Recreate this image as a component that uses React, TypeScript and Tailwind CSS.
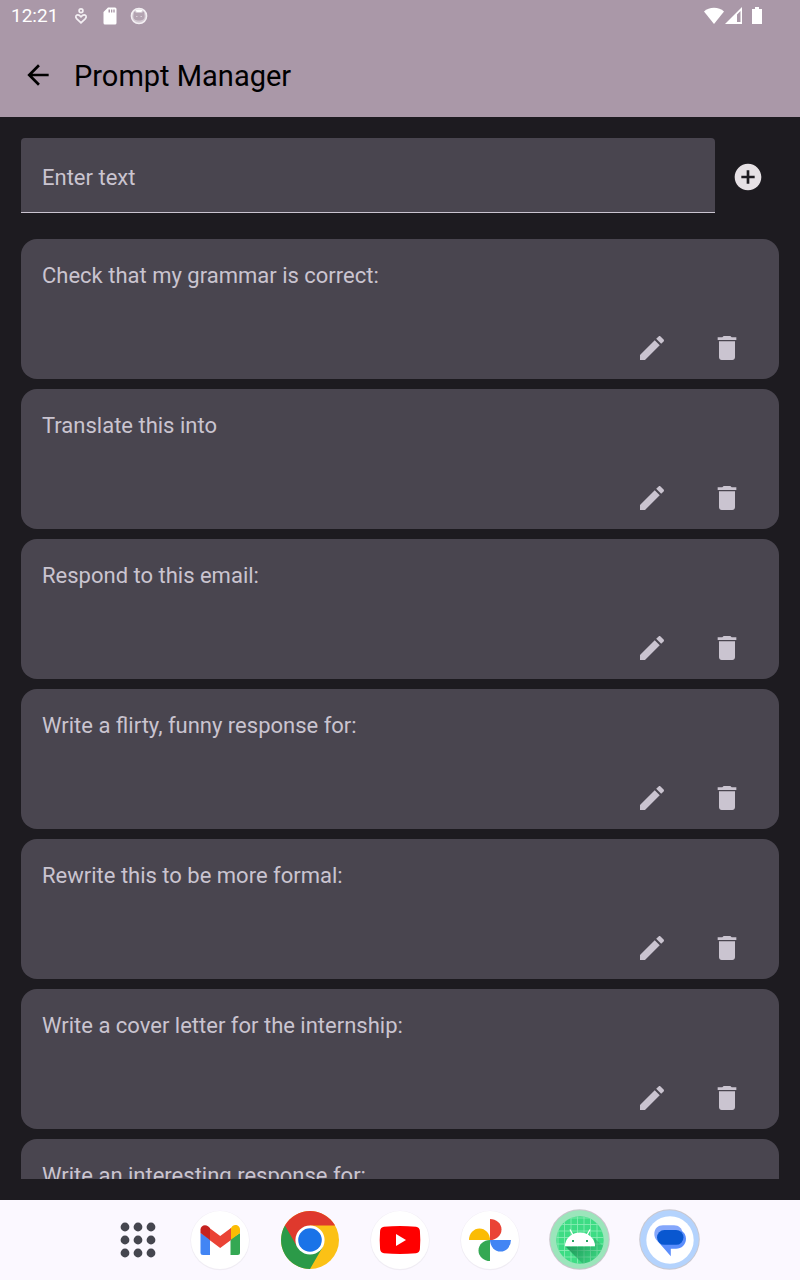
import type { ReactNode } from "react";

const prompts = [
  "Check that my grammar is correct:",
  "Translate this into",
  "Respond to this email:",
  "Write a flirty, funny response for:",
  "Rewrite this to be more formal:",
  "Write a cover letter for the internship:",
  "Write an interesting response for:",
];

function Icon({ d }: { d: string }) {
  return (
    <svg viewBox="0 0 24 24" className="size-8" fill="currentColor" aria-hidden="true">
      <path d={d} />
    </svg>
  );
}

const ARROW_BACK = "M20 11H7.830l5.590-5.590L12 4l-8 8 8 8 1.410-1.410L7.830 13H20v-2z";
const ADD_CIRCLE = "M12 2C6.480 2 2 6.480 2 12s4.480 10 10 10 10-4.480 10-10S17.520 2 12 2zm5 11h-4v4h-2v-4H7v-2h4V7h2v4h4v2z";
const EDIT =
  "M3 17.250V21h3.750L17.810 9.940l-3.750-3.750L3 17.250zM20.710 7.040c.39-.39.39-1.020 0-1.410l-2.340-2.340c-.39-.39-1.020-.39-1.410 0l-1.830 1.830 3.750 3.750 1.830-1.830z";
const DELETE = "M6 19c0 1.100.9 2 2 2h8c1.100 0 2-.9 2-2V7H6v12zM19 4h-3.500l-1-1h-5l-1 1H5v2h14V4z";

function StatusBar() {
  return (
    <div className="flex h-8 items-center pl-[11px] pr-[38px] text-[19px] leading-8 text-white">
      <span>12:21</span>
      <svg viewBox="0 0 14 18" className="ml-4 h-[18px] w-[14px]" fill="none" stroke="#f3eff3" strokeWidth="1.700" aria-hidden="true">
        <circle cx="7" cy="3.800" r="1.900" />
        <path d="M7 15.800 2.600 11.600C1 9.800 2 7.800 3.800 7.800c1.500 0 2.400 1 3.200 2 .8-1 1.700-2 3.200-2 1.800 0 2.800 2 1.200 3.800z" />
      </svg>
      <svg viewBox="0 0 14 18" className="ml-[15px] h-[18px] w-[14px]" aria-hidden="true">
        <path fill="#fff" fillRule="evenodd" d="M5 .5h7a1.500 1.500 0 0 1 1.500 1.500v14a1.500 1.500 0 0 1-1.500 1.500H2A1.500 1.500 0 0 1 .5 16V5zM5.500 2.500v3H7v-3zM8 2.500v3h1.300v-3zM10.300 2.500v3h1.400v-3z" />
      </svg>
      <svg viewBox="0 0 18 18" className="ml-[13px] size-[18px]" aria-hidden="true">
        <circle cx="9" cy="9" r="7.600" fill="#d3c9d2" stroke="#f3eff3" strokeWidth="1.500" />
        <path d="M4 4.500 6.500 6h5L14 4.500l.6 5c0 3-2.500 4-5.600 4s-5.600-1-5.600-4z" fill="#b3a3b1" />
        <path d="M5.500 3.200C7.500 2.300 10.500 2.300 12.500 3.200L11.300 5H6.700z" fill="#fff" />
        <path d="M6 9.500h1.500M10.500 9.500H12" stroke="#d8cfd7" />
      </svg>
      <span className="grow" />
      <div className="flex items-center pb-[2px]">
        <svg viewBox="0 0 20 17" className="h-[17px] w-5" fill="#fff" aria-hidden="true">
          <path d="M10 17 0 4.500C5-.5 15-.5 20 4.500z" />
        </svg>
        <svg viewBox="0 0 17 17" className="ml-px size-[17px]" aria-hidden="true">
          <path fill="#fff" fillRule="evenodd" d="M17 0v17H0zM12 7.500V15h3.500V4z" />
        </svg>
        <svg viewBox="0 0 10 17" className="ml-[10px] h-[17px] w-[10px]" fill="#fff" aria-hidden="true">
          <path d="M3 0h4v2h3v15H0V2h3z" />
        </svg>
      </div>
    </div>
  );
}

function PromptCard({ text }: { text: string }) {
  return (
    <li className="flex h-[140px] shrink-0 flex-col justify-between rounded-2xl bg-[#49454f] px-[21px] pt-[21px] text-[#cac4d0]">
      <p className="text-[22px] leading-8">{text}</p>
      <div className="flex justify-end gap-3">
        <button type="button" aria-label={`Edit: ${text}`} className="flex size-[63px] items-center justify-center">
          <Icon d={EDIT} />
        </button>
        <button type="button" aria-label={`Delete: ${text}`} className="flex size-[63px] items-center justify-center">
          <Icon d={DELETE} />
        </button>
      </div>
    </li>
  );
}

function AppButton({ label, children }: { label: string; children: ReactNode }) {
  return (
    <button type="button" aria-label={label} className="size-[60px] shrink-0">
      <svg viewBox="0 0 60 60" className="size-full overflow-visible" aria-hidden="true">
        {children}
      </svg>
    </button>
  );
}

function WhiteDisc() {
  return (
    <>
      <circle cx="30" cy="30.500" r="29.700" fill="#f0edf4" />
      <circle cx="30" cy="30" r="29" fill="#fff" />
    </>
  );
}

const gridLines = [8, 14.5, 21, 27.5, 34, 40.5, 47];

function Taskbar() {
  return (
    <nav aria-label="Taskbar" className="flex h-20 shrink-0 items-center justify-center gap-[30px] bg-[#fbf8ff] pl-5">
      <button type="button" aria-label="All apps" className="mr-1 size-9 shrink-0">
        <svg viewBox="0 0 36 36" className="size-full" fill="#45464f" aria-hidden="true">
          {[5, 18, 31].map((y) => [5, 18, 31].map((x) => <circle key={`${x}-${y}`} cx={x} cy={y} r="4.400" />))}
        </svg>
      </button>
      <AppButton label="Gmail">
        <WhiteDisc />
        <path d="M10.500 23v19.500a2.500 2.500 0 0 0 2.500 2.500h7V29z" fill="#4285f4" />
        <path d="M40.500 29v16h7a2.500 2.500 0 0 0 2.500-2.500V23z" fill="#34a853" />
        <path d="M40.500 18.500V30L50 23v-3.500c0-4-4.500-6-7.500-3.500z" fill="#fbbc04" />
        <path d="M19.500 30V18l10.700 8 10.800-8v12l-10.800 8z" fill="#ea4335" />
        <path d="M10.500 19.500V23l9.500 7V18l-2-1.700c-3-2.500-7.500-.5-7.500 3.200z" fill="#c5221f" />
      </AppButton>
      <AppButton label="Chrome">
        <circle cx="30" cy="30" r="29" fill="#fbc116" />
        <path d="M30 30 4.900 15.500A29 29 0 0 0 30 59L42.600 37.200z" fill="#2b9a48" />
        <path d="M4.900 15.500A29 29 0 0 1 55.100 15.500H30V30L17.400 37.200z" fill="#df392d" />
        <circle cx="30" cy="30" r="14.600" fill="#fff" />
        <circle cx="30" cy="30" r="11.800" fill="#1a73e8" />
      </AppButton>
      <AppButton label="YouTube">
        <WhiteDisc />
        <path d="M14 16.700q16-1.400 32 0 3.500.4 3.900 4 .8 9.300 0 18.600-.4 3.600-3.900 4-16 1.400-32 0-3.500-.4-3.900-4-.8-9.300 0-18.600.4-3.600 3.900-4z" fill="red" />
        <path d="M26 24v12l10-6z" fill="#fff" />
      </AppButton>
      <AppButton label="Photos">
        <WhiteDisc />
        <path d="M30 9a11.500 10.500 0 0 1 0 21z" fill="#ea4335" />
        <path d="M9 30a10.500 11.500 0 0 1 21 0z" fill="#fbbc04" />
        <path d="M30 51a11.500 10.500 0 0 1 0-21z" fill="#34a853" />
        <path d="M51 30a10.500 11.500 0 0 1-21 0z" fill="#4285f4" />
      </AppButton>
      <AppButton label="Android app">
        <circle cx="29.500" cy="29.500" r="30.300" fill="#c9c5cb" />
        <circle cx="29.500" cy="29.500" r="29.300" fill="#9be5bb" />
        <clipPath id="android-disc">
          <circle cx="30" cy="30" r="23.700" />
        </clipPath>
        <linearGradient id="android-shadow" gradientUnits="userSpaceOnUse" x1="22" y1="34" x2="46" y2="52">
          <stop offset="0" stopColor="#1c9557" stopOpacity=".9" />
          <stop offset="1" stopColor="#1c9557" stopOpacity=".1" />
        </linearGradient>
        <g clipPath="url(#android-disc)">
          <path d="M6 6h48v48H6z" fill="#3ddc84" />
          {gridLines.map((n) => (
            <path key={n} d={`M${n} 6v48M6 ${n}h48`} stroke="#8eedb8" strokeWidth="0.8" />
          ))}
          <path d="M15.500 36.500 33 54h20V36l-9-8 1 8.500z" fill="url(#android-shadow)" />
        </g>
        <path d="M15 36.300a15 13.800 0 0 1 30 0z" fill="#fff" />
        <path d="m23 25-3-5.500M37 25l3-5.500" stroke="#fff" strokeWidth="1.300" />
        <path d="M22 30h2v2h-2zM36 30h2v2h-2z" fill="#2aa565" />
      </AppButton>
      <AppButton label="Messages">
        <circle cx="29.500" cy="29.500" r="30.300" fill="#c9c8d0" />
        <circle cx="29.500" cy="29.500" r="29.300" fill="#b4d3fd" />
        <circle cx="30" cy="30" r="23.700" fill="#fff" />
        <path d="M23 15.300h11c4.800 0 8.300 3 8.500 8L23 34c-4.500-1.500-8.700-4.500-8.700-10s3.700-8.700 8.700-8.700z" fill="#84a7fb" />
        <path d="M41 20.500c3 1.700 5 4.500 5 8.300 0 6-4.500 10-10 10h-5.200v7.400L17.500 31z" fill="#5b8efc" />
        <rect x="17" y="20" width="26.500" height="14.800" rx="7.400" fill="#0957d0" />
      </AppButton>
    </nav>
  );
}

export default function App() {
  return (
    <div className="flex h-screen flex-col bg-[#1d1b20] font-[Roboto,sans-serif]">
      <header className="shrink-0 bg-[#aa98a8] text-black">
        <StatusBar />
        <div className="flex h-[85px] items-center gap-[5px] pl-1.5">
          <button type="button" aria-label="Back" className="flex size-[63px] items-center justify-center">
            <Icon d={ARROW_BACK} />
          </button>
          <h1 className="pt-0.5 text-[29px] leading-9">Prompt Manager</h1>
        </div>
      </header>
      <main className="flex min-h-0 grow flex-col p-[21px]">
        <form className="flex shrink-0 items-center" onSubmit={(event) => event.preventDefault()}>
          <input
            type="text"
            aria-label="Enter text"
            placeholder="Enter text"
            className="h-[75px] min-w-0 grow rounded-t border-b border-[#cac4d0] bg-[#49454f] px-[21px] pt-1 text-[22px] text-[#cac4d0] outline-none placeholder:text-[#cac4d0] placeholder:opacity-100"
          />
          <button type="submit" aria-label="Add prompt" className="flex h-16 w-16 items-center justify-center pl-0.5 pt-0.5 text-[#e6e1e5]">
            <Icon d={ADD_CIRCLE} />
          </button>
        </form>
        <ul className="mt-[26px] flex min-h-0 grow flex-col gap-[10px] overflow-hidden">
          {prompts.map((text) => (
            <PromptCard key={text} text={text} />
          ))}
        </ul>
      </main>
      <Taskbar />
    </div>
  );
}
